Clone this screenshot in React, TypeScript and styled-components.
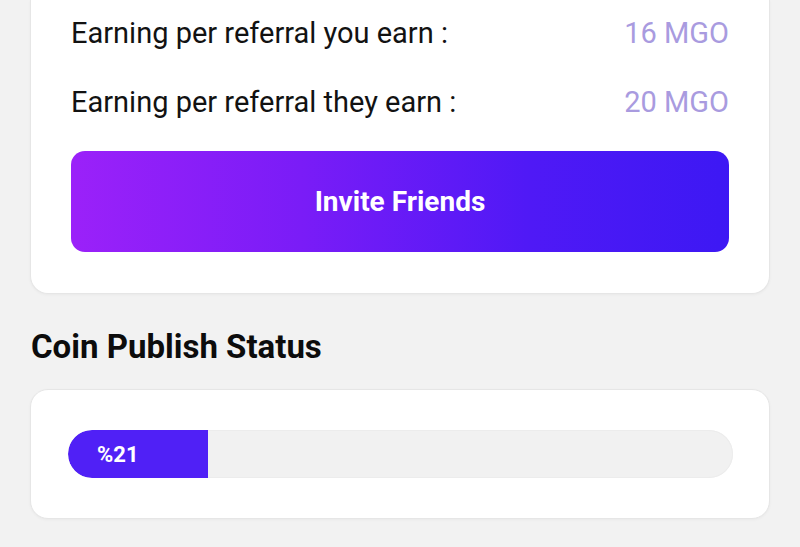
import React from 'react';
import styled, { createGlobalStyle } from 'styled-components';

const GlobalStyle = createGlobalStyle`
  html, body {
    margin: 0;
    padding: 0;
    background: #f2f2f2;
    font-family: Roboto, "Liberation Sans", Arial, sans-serif;
  }
`;

const referralRows = [
  { label: 'Earning per referral you earn :', value: '16 MGO' },
  { label: 'Earning per referral they earn :', value: '20 MGO' },
];

export default function App() {
  const progress = 21;

  return (
    <Page>
      <GlobalStyle />
      <ReferralCard>
        <RowList>
          {referralRows.map((row) => (
            <Row key={row.label}>
              <Label>{row.label}</Label>
              <Value>{row.value}</Value>
            </Row>
          ))}
        </RowList>
        <InviteButton>Invite Friends</InviteButton>
      </ReferralCard>

      <SectionTitle>Coin Publish Status</SectionTitle>

      <StatusCard>
        <Track>
          <Fill style={{ width: `${progress}%` }}>%{progress}</Fill>
        </Track>
      </StatusCard>
    </Page>
  );
}

const Page = styled.main`
  padding: 0 30px 28px 30px;
  width: 740px;
`;

const ReferralCard = styled.section`
  background: #fff;
  border: 1px solid #e6e6e6;
  border-top: none;
  border-radius: 0 0 18px 18px;
  box-shadow: 0 1px 3px rgba(0, 0, 0, 0.04);
  padding: 10px 40px 41px 40px;
`;

const RowList = styled.div`
  display: flex;
  flex-direction: column;
  gap: 23px;
  margin-bottom: 26px;
`;

const Row = styled.div`
  display: flex;
  justify-content: space-between;
  align-items: center;
  height: 46px;
`;

const Label = styled.span`
  font-size: 29px;
  color: #121212;
`;

const Value = styled.span`
  font-size: 29px;
  color: #a99bdf;
`;

const InviteButton = styled.button`
  width: 100%;
  height: 101px;
  border: none;
  border-radius: 14px;
  background: linear-gradient(90deg, #9b21f9 0%, #7a1cf7 35%, #4f19f6 70%, #3d18f4 100%);
  color: #fff;
  font-family: Roboto, "Liberation Sans", Arial, sans-serif;
  font-size: 28px;
  font-weight: 700;
  cursor: pointer;
`;

const SectionTitle = styled.h2`
  margin: 35px 0 24px 1px;
  font-size: 33px;
  line-height: 36px;
  font-weight: 700;
  color: #0c0c0c;
`;

const StatusCard = styled.section`
  background: #fff;
  border: 1px solid #e6e6e6;
  border-radius: 18px;
  box-shadow: 0 1px 3px rgba(0, 0, 0, 0.04);
  padding: 40px 36px 40px 37px;
`;

const Track = styled.div`
  height: 48px;
  border-radius: 24px;
  background: #f1f1f1;
  box-shadow: inset 0 0 0 1px #ececec;
  overflow: hidden;
  display: flex;
`;

const Fill = styled.div`
  background: #5020f6;
  color: #fff;
  font-size: 22px;
  font-weight: 700;
  display: flex;
  align-items: center;
  padding-left: 29px;
  box-sizing: border-box;
  border-radius: 24px 0 0 24px;
`;
